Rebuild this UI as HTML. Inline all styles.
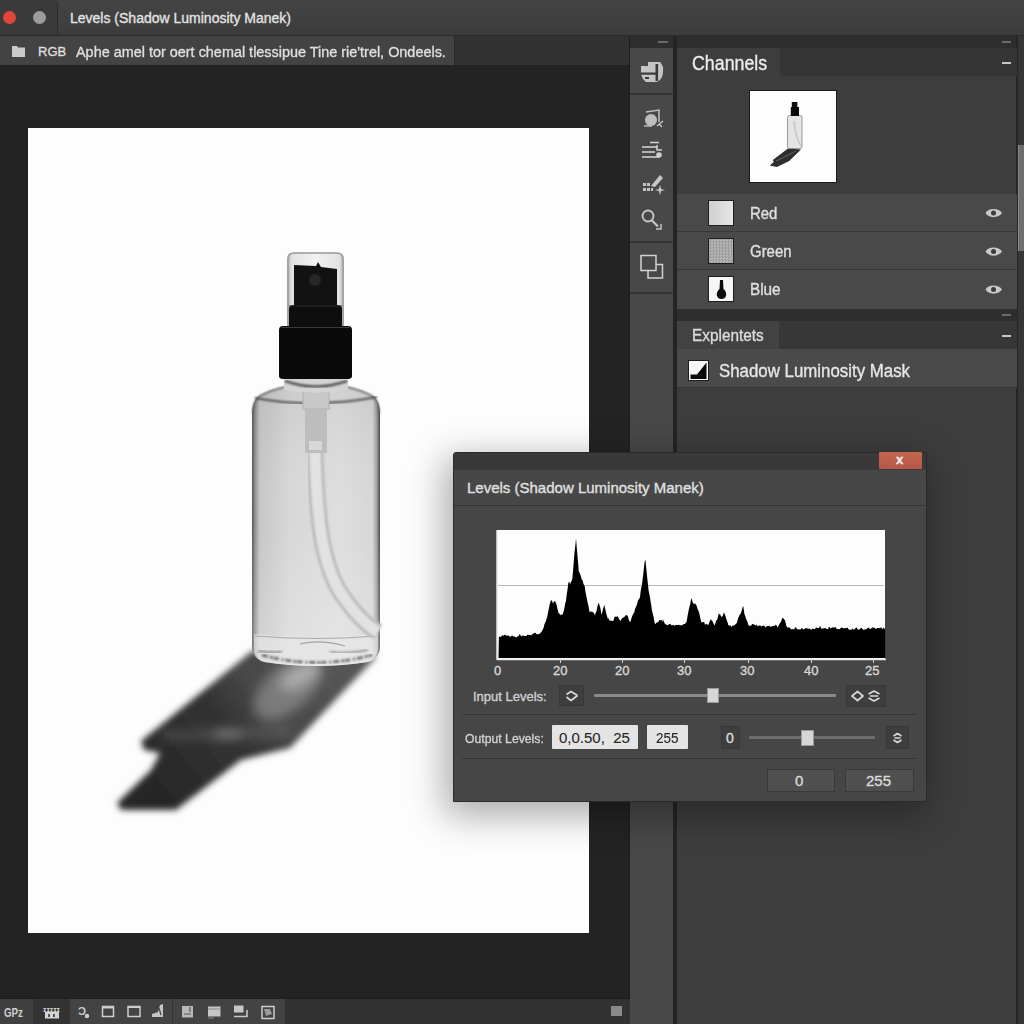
<!DOCTYPE html>
<html><head><meta charset="utf-8">
<style>
*{box-sizing:border-box;margin:0;padding:0}
html,body{width:1024px;height:1024px;overflow:hidden;background:#232323;font-family:"Liberation Sans",sans-serif;color:#dcdcdc}
.a{position:absolute}
.t{position:absolute;white-space:pre;transform-origin:0 0;line-height:1;-webkit-text-stroke:0.35px currentColor}
</style></head><body>

<!-- title bar -->
<div class="a" style="left:0;top:0;width:1024px;height:36px;background:linear-gradient(180deg,#444 0%,#404040 60%,#3c3c3c 100%);border-bottom:1px solid #2b2b2b"></div>
<div class="a" style="left:0;top:0;width:57px;height:35px;background:#3a3a3a"></div>
<div class="a" style="left:3px;top:11px;width:13px;height:13px;border-radius:50%;background:#e2453a"></div>
<div class="a" style="left:33px;top:11px;width:13px;height:13px;border-radius:50%;background:#9c9c9c"></div>
<div class="a" style="left:57px;top:2px;width:1px;height:34px;background:#2c2c2c"></div>
<div class="t" style="left:70px;top:11px;font-size:14px;color:#e2e2e2">Levels (Shadow Luminosity Manek)</div>

<!-- options bar -->
<div class="a" style="left:0;top:36px;width:630px;height:29px;background:#323232"></div>
<div class="a" style="left:0;top:36px;width:455px;height:29px;background:#434343;border-right:1px solid #2a2a2a"></div>
<svg class="a" style="left:11px;top:45px" width="15" height="13" viewBox="0 0 15 13"><path d="M1,1 L6,1 L7,2.5 L14,2.5 L14,12 L1,12 Z" fill="#cacaca"/></svg>
<div class="t" style="left:38px;top:45px;font-size:13px;color:#dedede">RGB</div>
<div class="t" style="left:76px;top:45px;font-size:14px;color:#dedede;transform:scaleX(1.03)">Aphe amel tor oert chemal tlessipue Tine rie'trel, Ondeels.</div>

<!-- canvas -->
<div class="a" style="left:0;top:65px;width:630px;height:934px;background:#232323"></div>

<svg class="a" style="left:0;top:0" width="1024" height="1024" viewBox="0 0 1024 1024">
  <defs>
    <filter id="blur5" x="-30%" y="-30%" width="160%" height="160%"><feGaussianBlur stdDeviation="4.5"/></filter>
    <filter id="blur8" x="-50%" y="-50%" width="200%" height="200%"><feGaussianBlur stdDeviation="6"/></filter>
    <filter id="blur3" x="-30%" y="-30%" width="160%" height="160%"><feGaussianBlur stdDeviation="3"/></filter>
    <filter id="blur1"><feGaussianBlur stdDeviation="0.8"/></filter>
    <filter id="blur2" x="-20%" y="-20%" width="140%" height="140%"><feGaussianBlur stdDeviation="1.6"/></filter>
    <linearGradient id="body" x1="0" x2="1" y1="0" y2="0">
      <stop offset="0" stop-color="#505050"/>
      <stop offset="0.02" stop-color="#8a8a8a"/>
      <stop offset="0.06" stop-color="#c6c6c6"/>
      <stop offset="0.3" stop-color="#d8d8d8"/>
      <stop offset="0.7" stop-color="#dedede"/>
      <stop offset="0.94" stop-color="#d6d6d6"/>
      <stop offset="0.975" stop-color="#a0a0a0"/>
      <stop offset="1" stop-color="#444"/>
    </linearGradient>
    <linearGradient id="bodyv" x1="0" x2="0" y1="0" y2="1">
      <stop offset="0" stop-color="#000" stop-opacity="0.06"/>
      <stop offset="0.5" stop-color="#fff" stop-opacity="0"/>
      <stop offset="1" stop-color="#fff" stop-opacity="0.25"/>
    </linearGradient>
    <linearGradient id="cap" x1="0" x2="1">
      <stop offset="0" stop-color="#a8a8a8"/>
      <stop offset="0.08" stop-color="#e2e2e2"/>
      <stop offset="0.5" stop-color="#f2f2f2"/>
      <stop offset="0.92" stop-color="#e2e2e2"/>
      <stop offset="1" stop-color="#a8a8a8"/>
    </linearGradient>
    <linearGradient id="shad" gradientUnits="userSpaceOnUse" x1="330" y1="660" x2="160" y2="800">
      <stop offset="0" stop-color="#555"/>
      <stop offset="0.35" stop-color="#474747"/>
      <stop offset="0.55" stop-color="#333"/>
      <stop offset="1" stop-color="#272727"/>
    </linearGradient>
    <radialGradient id="caustic" cx="0.5" cy="0.5" r="0.5">
      <stop offset="0" stop-color="#e8e8e8"/>
      <stop offset="0.4" stop-color="#b0b0b0" stop-opacity="0.6"/>
      <stop offset="1" stop-color="#909090" stop-opacity="0"/>
    </radialGradient>
  </defs>
  <rect x="28" y="128" width="561" height="805" fill="#fdfdfd"/>
  <!-- shadow -->
  <g filter="url(#blur3)">
    <path d="M252,651 L141,741 L144,750 L160,753 L151,770 L117,803 L121,810 L176,810 L241,760 L290,748 L377,656 Z" fill="url(#shad)"/>
  </g>
  <g filter="url(#blur8)">
    <ellipse cx="0" cy="0" rx="42" ry="22" fill="#b8b8b8" opacity="0.45" transform="translate(288,688) rotate(-42)"/>
    <ellipse cx="0" cy="0" rx="22" ry="10" fill="#d8d8d8" opacity="0.5" transform="translate(300,676) rotate(-30)"/>
    <path d="M160,736 L290,732" stroke="#bbbbbb" stroke-width="5" opacity="0.35"/>
    <ellipse cx="228" cy="734" rx="16" ry="4" fill="#d8d8d8" opacity="0.45"/>
  </g>
  <!-- bottle body -->
  <path d="M252,414 C252,402 256,396 264,393 C272,389 280,387 286,386 L346,386 C352,387 360,389 368,393 C376,396 380,402 380,414 L380,646 Q380,658 368,662 Q316,670 264,662 Q252,658 252,646 Z" fill="url(#body)"/>
  <path d="M252,414 C252,402 256,396 264,393 C272,389 280,387 286,386 L346,386 C352,387 360,389 368,393 C376,396 380,402 380,414 L380,646 Q380,658 368,662 Q316,670 264,662 Q252,658 252,646 Z" fill="url(#bodyv)"/>
  <path d="M253.2,413 L253.2,648" stroke="#4a4a4a" stroke-width="2.4" filter="url(#blur1)"/>
  <path d="M378.6,413 L378.6,648" stroke="#3e3e3e" stroke-width="2.8" filter="url(#blur1)"/>
  <path d="M253,414 C253,402 257,396 265,393.5 C273,390 280,388 286,387 M346,387 C352,388 359,390 367,393.5 C375,396 379,402 379,414" fill="none" stroke="#6a6a6a" stroke-width="1.6" filter="url(#blur1)"/>
  <!-- shoulder arc -->
  <path d="M255,398 Q313,409 377,397" fill="none" stroke="#4e4e4e" stroke-width="2.2" filter="url(#blur1)"/>
  
  <!-- base -->
  <path d="M254,634 Q316,640 378,634 L378,648 Q378,658 366,662 Q316,670 266,662 Q254,658 254,648 Z" fill="#e8e8e8" opacity="0.6"/>
  <path d="M255,636 Q316,641 377,636" fill="none" stroke="#9a9a9a" stroke-width="1" opacity="0.8"/>
  <path d="M300,644 Q320,639 345,646" fill="none" stroke="#888" stroke-width="1.2" opacity="0.7"/>
  <path d="M262,655 Q316,670 372,655" fill="none" stroke="#3a3a3a" stroke-width="2.6" stroke-dasharray="6 2 3 1 5 3 2 2" opacity="0.75" filter="url(#blur1)"/>
  <path d="M258,651 Q270,653 282,652" fill="none" stroke="#4a4a4a" stroke-width="2" opacity="0.6" filter="url(#blur1)"/>
  <path d="M330,652 Q350,654 368,650" fill="none" stroke="#4a4a4a" stroke-width="2" opacity="0.5" filter="url(#blur1)"/>
  <!-- dip tube -->
  <path d="M315,452 C317,520 322,562 340,592 C352,610 364,624 378,632" fill="none" stroke="#bcbcbc" stroke-width="17" filter="url(#blur1)"/>
  <path d="M315,452 C317,520 322,562 340,592 C352,610 364,624 378,632" fill="none" stroke="#e2e2e2" stroke-width="11" filter="url(#blur1)"/>
  <!-- pump insert -->
  <rect x="303" y="392" width="26" height="17" fill="#c8c8c8" stroke="#b0b0b0" stroke-width="1"/>
  <rect x="305" y="409" width="22" height="44" fill="#bdbdbd"/>
  <rect x="309" y="441" width="13" height="9" fill="#d8d8d8"/>
  <!-- neck -->
  <path d="M284,378 L348,378 L348,390 Q316,396 284,390 Z" fill="#d4d4d4"/>
  <path d="M285,381 Q316,392 347,381" fill="none" stroke="#3a3a3a" stroke-width="2" filter="url(#blur1)"/>
  <!-- overcap -->
  <path d="M287,330 L287,259 Q287,252 295,252 L336,252 Q344,252 344,259 L344,330 Z" fill="url(#cap)"/>
  <path d="M288,330 L288,259 Q288,253 295,253 L336,253 Q343,253 343,259 L343,330" fill="none" stroke="#9c9c9c" stroke-width="1.3"/>
  <!-- actuator -->
  <path d="M294,265 L316,266 L318,262 L321,267 L337,269 L337,306 L294,306 Z" fill="#121212"/>
  <circle cx="315" cy="280" r="6" fill="#262626"/>
  <path d="M289,309 Q289,305 294,305 L337,305 Q342,305 342,309 L342,328 L289,328 Z" fill="#0e0e0e"/>
  <!-- collar -->
  <path d="M279,330 Q279,326 283,326 L348,326 Q352,326 352,330 L352,376 Q352,379 348,379 L283,379 Q279,379 279,376 Z" fill="#0a0a0a"/>
  <path d="M281,327.5 L350,327.5" stroke="#3a3a3a" stroke-width="1"/>
  <path d="M289,306 L342,306" stroke="#2e2e2e" stroke-width="1"/>
</svg>


<!-- tool column -->
<div class="a" style="left:629px;top:36px;width:1px;height:963px;background:#1e1e1e"></div>
<div class="a" style="left:630px;top:36px;width:43px;height:988px;background:#484848"></div>
<div class="a" style="left:630px;top:36px;width:44px;height:12px;background:#2e2e2e"></div>
<div class="a" style="left:673px;top:36px;width:4px;height:988px;background:#242424"></div>

<!-- panel -->
<div class="a" style="left:677px;top:36px;width:340px;height:988px;background:#3d3d3d"></div>
<div class="a" style="left:677px;top:36px;width:340px;height:12px;background:#2e2e2e"></div>
<div class="a" style="left:1016px;top:36px;width:8px;height:988px;background:#363636;border-left:2px solid #262626"></div>
<div class="a" style="left:1018px;top:145px;width:6px;height:106px;background:#6e6e6e;border-left:1px solid #8a8a8a"></div>


<!-- tool column separators + icons -->
<div class="a" style="left:630px;top:93px;width:44px;height:2px;background:#333"></div>
<div class="a" style="left:630px;top:241px;width:44px;height:2px;background:#333"></div>
<div class="a" style="left:630px;top:292px;width:44px;height:2px;background:#333"></div>
<div class="a" style="left:658px;top:41px;width:10px;height:2px;background:#6a6a6a"></div>

<!-- channels tab bar -->
<div class="a" style="left:677px;top:48px;width:340px;height:28px;background:#353535"></div>
<div class="a" style="left:677px;top:48px;width:103px;height:28px;background:#3d3d3d"></div>
<div class="t" style="left:692px;top:53px;font-size:20px;color:#ececec;transform:scaleX(0.89)">Channels</div>
<div class="a" style="left:1002px;top:62px;width:9px;height:2px;background:#c8c8c8"></div>
<div class="a" style="left:1002px;top:41px;width:9px;height:2px;background:#6a6a6a"></div>

<!-- composite thumbnail -->
<div class="a" style="left:749px;top:90px;width:88px;height:93px;background:#fdfdfd;border:1.5px solid #1a1a1a"></div>

<!-- channel rows -->
<div class="a" style="left:677px;top:194px;width:340px;height:38px;background:#494949;border-bottom:1px solid #383838"></div>
<div class="a" style="left:677px;top:232px;width:340px;height:38px;background:#494949;border-bottom:1px solid #383838"></div>
<div class="a" style="left:677px;top:270px;width:340px;height:39px;background:#494949"></div>
<div class="a" style="left:708px;top:200px;width:26px;height:26px;background:linear-gradient(90deg,#d0d0d0,#e6e6e6);border:1.5px solid #1e1e1e"></div>
<div class="a" style="left:708px;top:238px;width:26px;height:26px;background:repeating-conic-gradient(#9c9c9c 0 25%,#b8b8b8 0 50%) 0 0/3px 3px;border:1.5px solid #1e1e1e"></div>
<div class="a" style="left:708px;top:276px;width:26px;height:26px;background:#f6f6f6;border:1.5px solid #1e1e1e"></div>
<div class="t" style="left:750px;top:205px;font-size:17px;color:#e0e0e0;transform:scaleX(0.88)">Red</div>
<div class="t" style="left:750px;top:243px;font-size:17px;color:#e0e0e0;transform:scaleX(0.88)">Green</div>
<div class="t" style="left:750px;top:281px;font-size:17px;color:#e0e0e0;transform:scaleX(0.9)">Blue</div>


<!-- gap -->
<div class="a" style="left:677px;top:309px;width:340px;height:12px;background:#2e2e2e"></div>
<div class="a" style="left:1002px;top:314px;width:9px;height:2px;background:#6a6a6a"></div>

<!-- explentets tab -->
<div class="a" style="left:677px;top:321px;width:340px;height:28px;background:#373737"></div>
<div class="a" style="left:677px;top:321px;width:102px;height:28px;background:#424242"></div>
<div class="t" style="left:692px;top:328px;font-size:16px;color:#dcdcdc;transform:scaleX(0.96)">Explentets</div>
<div class="a" style="left:1002px;top:335px;width:9px;height:2px;background:#c8c8c8"></div>

<!-- shadow lum mask row -->
<div class="a" style="left:677px;top:349px;width:340px;height:39px;background:#4a4a4a;border-bottom:1px solid #363636"></div>
<div class="a" style="left:688px;top:360px;width:21px;height:21px;background:#f6f6f6;border:1.5px solid #1e1e1e"></div>
<div class="t" style="left:719px;top:362px;font-size:18px;color:#e6e6e6;transform:scaleX(0.936)">Shadow Luminosity Mask</div>





<!-- tool icons -->
<svg class="a" style="left:630px;top:48px" width="44" height="250" viewBox="630 48 44 250">
  <g fill="#c4c4c4">
    <path d="M648,62 L660,62 Q664,66 663,72 Q663,79 657,82 L646,82 Q641,78 641,72 L641,66 L648,66 Z"/>
  </g>
  <rect x="641" y="72.5" width="15" height="2.2" fill="#3a3a3a"/>
  <rect x="645" y="77" width="4" height="2" fill="#3a3a3a"/>
  <rect x="655.5" y="64" width="2.6" height="17" fill="#3a3a3a"/>
  <!-- icon 2 -->
  <path d="M646,112 L659,110 L659,122" fill="none" stroke="#c0c0c0" stroke-width="1.5"/>
  <circle cx="651" cy="120" r="6" fill="#bdbdbd"/>
  <path d="M644,126 L652,126" stroke="#bdbdbd" stroke-width="1.5"/>
  <path d="M657,126 L663,121 M659,124 L662,127" stroke="#c8c8c8" stroke-width="1.3"/>
  <!-- icon 3 -->
  <g stroke="#cfcfcf" stroke-width="1.6">
    <line x1="650" y1="142.5" x2="659" y2="142.5"/>
    <line x1="642" y1="147" x2="657" y2="147"/>
    <line x1="642" y1="152" x2="655" y2="152"/>
    <line x1="642" y1="157" x2="659" y2="157"/>
    <path d="M657,145 L657,150 L662,150" fill="none"/>
  </g>
  <circle cx="659" cy="155" r="2.8" fill="#cfcfcf"/>
  <!-- icon 4 -->
  <path d="M660,175 L663,178 L655,187 L651,186 Z" fill="#c8c8c8"/>
  <g fill="#c4c4c4">
    <rect x="643" y="183" width="3" height="3"/><rect x="647" y="183" width="3" height="3"/>
    <rect x="643" y="188" width="3" height="3"/><rect x="647" y="188" width="3" height="3"/><rect x="651" y="188" width="2" height="3"/>
    <path d="M660,185 L661.2,189 L665,190 L661.2,191 L660,195 L658.8,191 L655,190 L658.8,189 Z"/>
  </g>
  <!-- icon 5 -->
  <circle cx="648" cy="216" r="5.5" fill="none" stroke="#c8c8c8" stroke-width="1.8"/>
  <line x1="652" y1="220.5" x2="658" y2="226.5" stroke="#c8c8c8" stroke-width="2.2"/>
  <path d="M656,229 L661,229 L661,224" fill="none" stroke="#c8c8c8" stroke-width="1.4"/>
  <!-- icon 6 -->
  <rect x="641" y="255.5" width="15" height="15" fill="none" stroke="#d2d2d2" stroke-width="1.5"/>
  <path d="M656,264.5 L662.5,264.5 L662.5,278 L648,278 L648,271" fill="none" stroke="#d2d2d2" stroke-width="1.5"/>
</svg>

<!-- eye icons -->
<svg class="a" style="left:980px;top:200px" width="30" height="100" viewBox="980 200 30 100">
  <g fill="#c9c9c9">
    <path d="M985.5,213 C988,207.5 999,207.5 1002,213 C999,218.5 988,218.5 985.5,213 Z"/>
    <path d="M985.5,251.5 C988,246 999,246 1002,251.5 C999,257 988,257 985.5,251.5 Z"/>
    <path d="M985.5,289.5 C988,284 999,284 1002,289.5 C999,295 988,295 985.5,289.5 Z"/>
  </g>
  <g fill="#3c3c3c">
    <circle cx="993.5" cy="213" r="2.5"/><circle cx="993.5" cy="251.5" r="2.5"/><circle cx="993.5" cy="289.5" r="2.5"/>
  </g>
</svg>

<!-- channel thumbnail mini bottle -->
<svg class="a" style="left:749px;top:90px" width="88" height="93" viewBox="749 90 88 93">
  <path d="M788,148.5 L772.8,159.9 L773.8,161.9 L769.7,165.5 L776.9,167.1 L789.2,160.9 L801,149.5 Z" fill="#2e2e2e"/>
  <path d="M776,161 L796,151" stroke="#6a6a6a" stroke-width="1.2" opacity="0.7"/>
  <rect x="787.5" y="115.5" width="14.5" height="33" rx="2" fill="#e4e4e4" stroke="#8e8e8e" stroke-width="0.9"/>
  <path d="M794,121 Q795,136 801,146" stroke="#c4c4c4" stroke-width="1.4" fill="none"/>
  <rect x="791.8" y="102" width="5.6" height="6" fill="#111"/>
  <rect x="790.8" y="107" width="8.2" height="9" fill="#0a0a0a"/>
</svg>

<!-- blue thumb silhouette -->
<svg class="a" style="left:708px;top:276px" width="26" height="26" viewBox="708 276 26 26">
  <path d="M720,280 L723,280 L723.5,289 Q727,292 726,296 Q725,299 721.5,299 Q718,299 717,296 Q716,292 719.5,289 Z" fill="#0a0a0a"/>
</svg>

<!-- mask icon triangle -->
<svg class="a" style="left:688px;top:360px" width="21" height="21" viewBox="688 360 21 21">
  <path d="M690.5,374.5 L697,374.5 L706.5,362.5 L706.5,379 L690.5,379 Z" fill="#0a0a0a"/>
</svg>


<!-- status bar -->
<div class="a" style="left:0;top:998px;width:630px;height:26px;background:#323232;border-top:1px solid #1e1e1e"></div>
<div class="a" style="left:0;top:999px;width:33px;height:25px;background:#404040"></div>
<div class="a" style="left:33px;top:999px;width:37px;height:25px;background:#333"></div>
<div class="a" style="left:70px;top:999px;width:102px;height:25px;background:#434343"></div>
<div class="a" style="left:173px;top:999px;width:112px;height:25px;background:#434343"></div>
<div class="a" style="left:611px;top:1006px;width:11px;height:10px;background:#8a8a8a"></div>

<svg class="a" style="left:0;top:998px" width="300" height="26" viewBox="0 998 300 26">
  <g fill="#c8c8c8">
    <text x="4" y="1017" font-family="Liberation Sans" font-weight="bold" font-size="12.5" fill="#cfcfcf" textLength="19" lengthAdjust="spacingAndGlyphs">GPz</text>
    <text x="43" y="1011.5" font-family="Liberation Sans" font-weight="bold" font-size="7" fill="#cfcfcf" textLength="17" lengthAdjust="spacingAndGlyphs">ɪɪɪɪɪ</text>
    <rect x="45" y="1012" width="14" height="6.5" fill="#d4d4d4"/>
    <rect x="48" y="1014" width="2" height="3" fill="#555"/><rect x="53" y="1014" width="2" height="3" fill="#555"/>
    <text x="78" y="1015" font-family="Liberation Sans" font-weight="bold" font-size="11" fill="#cacaca">Ɔ</text>
    <circle cx="87" cy="1016" r="2.2" fill="#cacaca"/>
  </g>
  <g fill="none" stroke="#cdcdcd" stroke-width="1.5">
    <rect x="102.5" y="1006.5" width="11" height="10"/>
    <rect x="128" y="1006.5" width="12" height="10"/>
    <rect x="262" y="1006.5" width="12" height="12"/>
  </g>
  <rect x="102.5" y="1006" width="11" height="2.5" fill="#cdcdcd"/>
  <rect x="128" y="1006" width="12" height="2" fill="#cdcdcd"/>
  <path d="M152,1017 L163,1017 L163,1004 L160,1005 L158,1012 L152,1014 Z" fill="#c4c4c4"/>
  <path d="M159,1008 L161,1015" stroke="#444" stroke-width="1.2"/>
  <rect x="182" y="1006" width="11" height="11.5" fill="#b8b8b8"/>
  <path d="M184,1014 L191,1014 M190,1007 L190,1012" stroke="#555" stroke-width="1.2"/>
  <rect x="208" y="1006.5" width="12.5" height="10" fill="#c6c6c6"/>
  <path d="M208,1009 L220,1009 M208,1018 L214,1018" stroke="#8a8a8a" stroke-width="1"/>
  <rect x="234" y="1005.5" width="9.5" height="7" fill="#c6c6c6"/>
  <path d="M234,1016.5 L247,1016.5 L247,1010" fill="none" stroke="#c6c6c6" stroke-width="1.6"/>
  <path d="M264,1009 L270,1009 L272,1014 L266,1016 Z" fill="#9a9a9a"/>
</svg>
<!-- dialog shadow -->
<div class="a" style="left:453px;top:452px;width:474px;height:350px;box-shadow:-5px 10px 36px 4px rgba(0,0,0,0.32);border-radius:3px"></div>
<!-- dialog -->
<div class="a" style="left:453px;top:452px;width:474px;height:350px;background:#464646;border-radius:3px 3px 0 0;overflow:hidden;border:1px solid #2a2a2a">
  <div class="a" style="left:0;top:0;width:474px;height:17px;background:#393939"></div>
  <div class="a" style="left:0;top:17px;width:474px;height:36px;background:#474747;border-bottom:1px solid #343434"></div>
</div>
<div class="a" style="left:879px;top:452px;width:43px;height:17px;background:linear-gradient(180deg,#c4654e,#b65848);border-radius:1px"></div>
<div class="t" style="left:896px;top:453px;font-size:13px;font-weight:bold;color:#f0f0f0">x</div>
<div class="t" style="left:467px;top:480px;font-size:15px;color:#e0e0e0">Levels (Shadow Luminosity Manek)</div>

<svg class="a" style="left:0;top:0" width="1024" height="1024" viewBox="0 0 1024 1024">
  <rect x="497" y="530" width="388" height="129" fill="#fdfdfd"/>
  <line x1="498" y1="585.5" x2="884" y2="585.5" stroke="#b8b8b8" stroke-width="1.2"/>
  <path d="M498.5,658 L498.9,637.1 L499.0,636.4 L500.3,636.9 L501.6,636.3 L502.9,634.9 L503.6,636.0 L504.2,634.7 L505.5,635.0 L506.8,635.9 L508.1,635.3 L509.4,636.6 L510.7,636.7 L512.0,635.4 L513.3,636.3 L514.4,637.1 L514.6,636.0 L515.9,637.4 L517.2,636.7 L518.5,636.1 L519.8,634.0 L521.1,636.6 L522.4,635.6 L523.7,635.8 L525.0,636.0 L526.3,636.1 L527.6,634.6 L528.9,634.9 L530.2,635.1 L531.5,635.4 L531.6,634.5 L532.8,633.9 L534.1,633.1 L535.4,632.7 L536.7,634.2 L538.0,634.3 L539.3,633.7 L540.2,633.4 L540.6,632.7 L541.9,631.3 L543.2,628.5 L543.4,628.5 L544.5,623.9 L545.8,621.3 L546.6,618.8 L547.1,617.2 L548.4,610.7 L549.7,604.3 L550.9,600.6 L551.0,599.7 L552.3,601.5 L553.0,603.8 L553.6,602.0 L554.9,601.1 L555.2,601.2 L556.2,603.5 L557.5,609.1 L558.4,612.4 L558.8,613.5 L560.1,614.1 L560.6,615.6 L561.4,614.6 L562.7,614.5 L564.0,610.1 L565.3,603.0 L565.9,601.6 L566.6,595.5 L567.9,586.7 L568.5,582.3 L569.2,581.8 L570.2,584.5 L570.5,583.1 L571.8,580.6 L572.4,578.0 L573.1,570.1 L574.4,553.8 L575.7,542.0 L576.0,538.3 L577.0,550.6 L578.3,565.2 L578.8,571.6 L579.6,572.7 L580.9,576.3 L582.0,580.2 L582.2,579.2 L583.5,584.0 L584.8,586.4 L585.3,590.9 L586.1,595.0 L587.4,601.6 L588.7,607.2 L589.6,612.4 L590.0,611.6 L591.3,612.1 L591.7,611.3 L592.6,612.1 L593.9,613.0 L595.0,615.6 L595.2,614.3 L596.5,611.0 L597.8,604.7 L598.8,602.7 L599.1,603.9 L600.4,608.0 L601.4,614.5 L601.7,614.3 L603.0,609.2 L604.2,604.9 L604.3,604.7 L605.6,610.7 L606.9,615.7 L607.8,618.8 L608.2,618.1 L609.5,620.4 L610.8,620.5 L612.1,620.9 L613.2,621.0 L613.4,620.5 L614.7,616.4 L616.0,616.7 L617.3,616.7 L617.5,615.6 L618.6,618.2 L619.9,620.4 L620.7,621.0 L621.2,619.5 L622.5,617.9 L623.8,617.3 L625.1,616.2 L626.1,614.5 L626.4,615.1 L627.7,616.1 L629.0,620.3 L630.3,622.2 L630.4,622.1 L631.6,617.8 L632.9,614.5 L634.2,612.4 L634.7,610.2 L635.5,607.7 L636.8,605.1 L638.1,600.3 L639.4,598.8 L640.1,596.3 L640.7,591.1 L642.0,584.1 L643.3,573.7 L644.6,561.8 L645.4,559.8 L645.9,564.6 L647.2,577.5 L648.5,589.6 L648.7,590.9 L649.8,596.6 L651.1,604.6 L651.9,610.2 L652.4,612.3 L653.7,617.6 L655.0,624.5 L655.1,624.2 L656.3,622.7 L657.6,622.4 L658.9,621.1 L659.4,619.9 L660.2,620.3 L661.5,620.0 L662.6,622.1 L662.8,619.1 L664.1,622.2 L665.4,624.5 L666.7,624.5 L666.9,625.3 L668.0,625.1 L669.3,624.0 L670.6,624.2 L671.9,625.4 L673.2,624.8 L673.4,624.9 L674.5,625.7 L675.8,625.1 L677.1,624.9 L678.4,624.8 L679.7,625.0 L680.0,625.3 L681.0,625.2 L682.3,625.3 L683.6,623.9 L684.9,624.1 L686.2,622.0 L686.4,623.1 L687.5,616.2 L688.8,609.5 L690.1,604.5 L691.2,598.4 L691.4,597.9 L692.7,602.3 L692.9,602.7 L694.0,604.1 L695.3,603.5 L696.1,604.9 L696.6,605.6 L697.9,610.1 L698.3,610.2 L699.2,612.8 L700.5,618.9 L701.5,623.1 L701.8,622.3 L703.1,622.1 L704.4,622.2 L704.7,624.2 L705.7,624.6 L707.0,623.7 L707.9,625.3 L708.3,625.1 L709.6,621.4 L710.9,619.1 L711.2,619.9 L712.2,620.8 L713.5,623.4 L714.4,625.3 L714.8,625.0 L716.1,620.8 L717.4,619.2 L718.7,613.5 L719.8,614.5 L720.0,614.3 L721.3,616.8 L721.9,616.7 L722.6,616.3 L723.9,612.5 L724.5,613.5 L725.2,615.3 L726.5,619.6 L727.8,623.0 L728.3,625.3 L729.1,625.6 L730.4,625.5 L731.6,627.4 L731.7,626.0 L733.0,625.6 L734.3,625.6 L735.6,623.9 L736.9,623.1 L738.2,617.9 L739.5,615.3 L740.8,613.3 L741.2,612.4 L742.1,608.9 L743.0,606.0 L743.4,607.1 L744.5,614.5 L744.7,614.6 L746.0,618.8 L747.3,621.3 L748.6,625.7 L748.8,625.3 L749.9,625.9 L751.2,625.5 L752.5,623.7 L753.8,624.4 L755.1,624.9 L755.2,625.7 L756.4,624.6 L757.7,626.6 L759.0,625.4 L760.3,625.5 L761.6,626.4 L762.9,625.5 L764.2,625.8 L765.5,627.5 L766.8,625.9 L768.1,626.2 L769.4,625.5 L770.2,627.0 L770.7,626.7 L772.0,626.2 L773.3,625.8 L774.6,626.0 L775.9,624.5 L777.2,626.5 L777.8,627.4 L778.5,625.8 L779.8,623.6 L781.1,621.6 L782.4,617.7 L782.7,617.8 L783.7,618.8 L785.0,620.3 L786.3,625.8 L787.4,627.4 L787.6,627.8 L788.9,626.9 L790.2,628.3 L791.5,629.6 L791.7,629.2 L792.8,629.1 L794.1,629.4 L795.4,627.1 L796.7,628.6 L798.0,629.7 L799.3,629.2 L800.6,629.4 L801.9,627.8 L803.2,629.5 L804.5,629.0 L805.8,628.0 L807.1,628.4 L808.4,628.4 L808.9,629.2 L809.7,628.2 L811.0,629.9 L812.3,628.5 L813.6,629.1 L814.9,628.9 L816.2,627.6 L817.5,627.9 L818.8,628.0 L820.1,625.9 L821.4,628.7 L822.7,628.6 L824.0,628.2 L825.3,628.0 L826.6,628.9 L827.9,629.1 L829.2,626.8 L830.4,628.1 L830.5,628.6 L831.8,627.8 L833.1,627.3 L834.4,627.4 L835.7,627.3 L837.0,629.2 L838.3,629.0 L839.6,629.2 L840.9,627.8 L842.2,627.4 L843.5,628.5 L844.8,628.1 L846.1,628.3 L847.4,627.4 L848.7,629.6 L850.0,629.8 L851.3,629.8 L851.9,629.2 L852.6,628.6 L853.9,630.1 L855.2,628.6 L856.5,627.2 L857.8,629.6 L859.1,629.8 L860.4,628.2 L861.7,628.0 L863.0,629.8 L864.3,629.4 L865.6,629.6 L866.9,628.7 L868.2,627.6 L869.5,628.5 L870.8,628.9 L872.1,627.5 L873.4,627.6 L874.7,628.1 L876.0,629.0 L877.3,627.9 L878.6,627.9 L879.9,628.1 L881.2,627.6 L882.5,629.2 L883.8,627.6 L885.1,629.4 L885.2,628.5 L885.2,658 Z" fill="#000"/>
  <line x1="497" y1="530" x2="497" y2="660" stroke="#e8e8e8" stroke-width="1.5"/>
  <line x1="497" y1="659.5" x2="886" y2="659.5" stroke="#e8e8e8" stroke-width="1.5"/>
  <g stroke="#cfcfcf" stroke-width="1">
    <line x1="560.5" y1="660" x2="560.5" y2="663"/><line x1="622.5" y1="660" x2="622.5" y2="663"/>
    <line x1="684.5" y1="660" x2="684.5" y2="663"/><line x1="748.5" y1="660" x2="748.5" y2="663"/>
    <line x1="811.5" y1="660" x2="811.5" y2="663"/><line x1="873.5" y1="660" x2="873.5" y2="663"/>
  </g>
</svg>
<div class="t" style="left:494px;top:664px;font-size:13px;color:#d8d8d8">0</div>
<div class="t" style="left:553px;top:664px;font-size:13px;color:#d8d8d8">20</div>
<div class="t" style="left:615px;top:664px;font-size:13px;color:#d8d8d8">20</div>
<div class="t" style="left:677px;top:664px;font-size:13px;color:#d8d8d8">30</div>
<div class="t" style="left:740px;top:664px;font-size:13px;color:#d8d8d8">30</div>
<div class="t" style="left:804px;top:664px;font-size:13px;color:#d8d8d8">40</div>
<div class="t" style="left:865px;top:664px;font-size:13px;color:#d8d8d8">25</div>




<!-- input levels -->
<div class="t" style="left:473px;top:690px;font-size:13px;color:#d0d0d0">Input Levels:</div>
<div class="a" style="left:559px;top:685px;width:25px;height:21px;background:#3e3e3e;border:1px solid #383838"></div>
<div class="a" style="left:594px;top:694px;width:242px;height:3px;background:#8a8a8a;border-radius:1px"></div>
<div class="a" style="left:707px;top:688px;width:12px;height:15px;background:#d6d6d6;border:1px solid #9a9a9a"></div>
<div class="a" style="left:846px;top:685px;width:40px;height:22px;background:#3e3e3e;border:1px solid #383838"></div>
<div class="a" style="left:462px;top:714px;width:455px;height:1px;background:#363636"></div>

<!-- output levels -->
<div class="t" style="left:465px;top:732px;font-size:13px;color:#d0d0d0;transform:scaleX(0.94)">Output Levels:</div>
<div class="a" style="left:552px;top:725px;width:86px;height:24px;background:#e4e4e4;border-radius:1px"></div>
<div class="t" style="left:559px;top:730px;font-size:15px;color:#262626;-webkit-text-stroke:0.1px #262626">0,0.50,  25</div>
<div class="a" style="left:647px;top:725px;width:41px;height:24px;background:#e4e4e4;border-radius:1px"></div>
<div class="t" style="left:656px;top:730px;font-size:15px;color:#262626;-webkit-text-stroke:0.1px #262626;transform:scaleX(0.9)">255</div>
<div class="a" style="left:721px;top:726px;width:19px;height:23px;background:#3e3e3e;border:1px solid #383838"></div>
<div class="t" style="left:726px;top:731px;font-size:14px;color:#dcdcdc">0</div>
<div class="a" style="left:749px;top:736px;width:126px;height:3px;background:#6e6e6e;border-radius:1px"></div>
<div class="a" style="left:801px;top:730px;width:13px;height:16px;background:#d6d6d6;border:1px solid #9a9a9a"></div>
<div class="a" style="left:886px;top:726px;width:23px;height:23px;background:#3e3e3e;border:1px solid #383838"></div>
<div class="a" style="left:462px;top:758px;width:455px;height:1px;background:#363636"></div>

<div class="a" style="left:767px;top:769px;width:68px;height:23px;background:#4f4f4f;border:1px solid #3a3a3a"></div>
<div class="t" style="left:795px;top:773px;font-size:15px;color:#dcdcdc">0</div>
<div class="a" style="left:845px;top:769px;width:69px;height:23px;background:#4f4f4f;border:1px solid #3a3a3a"></div>
<div class="t" style="left:866px;top:773px;font-size:15px;color:#dcdcdc">255</div>

<svg class="a" style="left:0;top:0;pointer-events:none" width="1024" height="1024" viewBox="0 0 1024 1024">
  <g fill="none" stroke="#d8d8d8" stroke-width="1.7" stroke-linejoin="round">
    <path d="M566.5,694.5 L571,691.5 L577.5,695.5 M566.5,697 L571,700.5 L577.5,695.5"/>
    <path d="M852,696 L857.5,691.5 L863,696 L857.5,700.5 Z"/>
    <path d="M868.5,694 L874,691 L879.5,694 M868.5,698 L874,701 L879.5,698 M870,696 L878,696"/>
    <path d="M893.5,736 L897.5,733.5 L901.5,736 M893.5,740 L897.5,742.5 L901.5,740 M894.5,738 L900.5,738"/>
  </g>
</svg>
</body></html>
